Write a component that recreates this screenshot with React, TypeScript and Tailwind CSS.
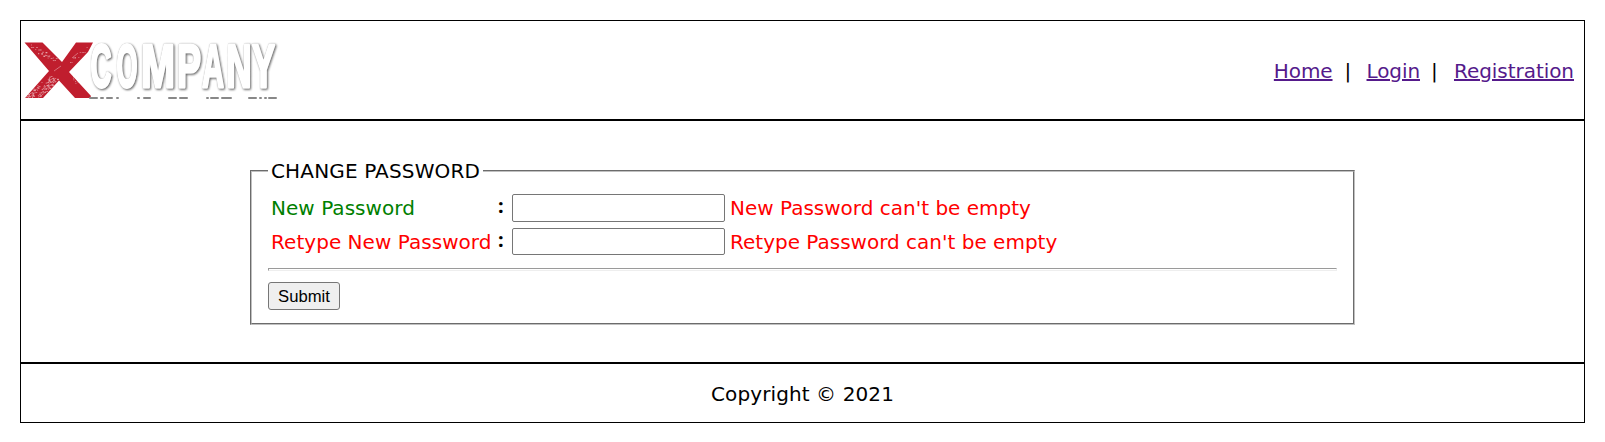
import React from "react";

const letters = [
  { ch: "C", x: 90.5, w: 21 },
  { ch: "O", x: 116.5, w: 21 },
  { ch: "M", x: 141, w: 34 },
  { ch: "P", x: 177, w: 24 },
  { ch: "A", x: 202, w: 22 },
  { ch: "N", x: 226.5, w: 25 },
  { ch: "Y", x: 252, w: 23 },
];

const dashes = [
  [89, 9], [100, 4], [106, 7], [116, 3], [137, 3], [143, 8], [168, 9], [179, 9],
  [206, 3], [210, 9], [221, 11], [248, 9], [259, 3], [264, 3], [268, 9],
];

const specks = Array.from({ length: 150 }, (_, i) => {
  const t = (i * 0.618) % 1;
  const s = (i * 0.387) % 1;
  if (i % 15 < 10) return { x: 28 + t * 26 + s * 10 - 4, y: 96 - t * 21 + s * 5 };
  if (i % 15 < 12) return { x: 72 + s * 12, y: 74 + t * 9 };
  if (i % 15 < 14) return { x: 30 + t * 27, y: 44 + t * 13 + s * 6 };
  return { x: 70 + t * 18, y: 60 - t * 15 + s * 5 };
});

function Logo() {
  return (
    <svg className="block h-[70px] w-[260px]" viewBox="21 36 260 70" role="img" aria-label="X Company">
      <path fill="#c01e2e" d="M24.500 42.500H42.500L62 62L76 42.500H93L88 52L69 72L91 96L90 98H75L59 80.500L43 98H25L49 71Z" />
      <g fill="#fff" opacity="0.6">
        {specks.map((p, i) => (
          <rect key={i} x={p.x} y={p.y} width={i % 3 ? 1 : 1.8} height={i % 4 ? 0.7 : 1.3} />
        ))}
      </g>
      <path d="M54 71l7-5M72 58l6-5M45 55l5 2" stroke="#e8a5ab" strokeWidth="0.6" />
      <g
        fill="#fff"
        stroke="#fff"
        strokeWidth="3"
        strokeLinejoin="round"
        fontFamily="Liberation Sans Narrow, Liberation Sans"
        fontWeight="700"
        fontSize="62"
        className="[filter:drop-shadow(0_0_0.4px_#bbb)_drop-shadow(1px_1px_0.8px_#666)]"
      >
        {letters.map((l) => (
          <text key={l.ch} x={l.x} y="87" textLength={l.w} lengthAdjust="spacingAndGlyphs">
            {l.ch}
          </text>
        ))}
      </g>
      <g fill="#888" className="[filter:blur(0.4px)]">
        {dashes.map(([x, w]) => (
          <rect key={x} x={x} y="97" width={w} height="2" rx="1" />
        ))}
      </g>
    </svg>
  );
}

function Field({ label, error, color, height }: { label: string; error: string; color: string; height: string }) {
  return (
    <div className="flex items-start">
      <label className={`w-[230px] pl-[3px] leading-[29px] tracking-[0.04px] ${color}`}>{label}</label>
      <b className="w-[14px] font-['Noto_Sans','DejaVu_Sans',sans-serif] leading-[24px]">:</b>
      <input type="password" className={`w-[213px] rounded-[2px] border border-[#767676] bg-white ${height}`} />
      <span className="pl-[5px] leading-[29px] text-[#ff0000]">{error}</span>
    </div>
  );
}

export default function App() {
  return (
    <div className="h-[442px] bg-white p-5 pb-[19px] font-['Verdana','DejaVu_Sans',sans-serif] text-[20px] whitespace-nowrap text-black">
      <div className="flex h-[403px] flex-col border border-black">
        <header className="flex h-[100px] items-start justify-between border-b-2 border-black pt-[15px] pr-[10px]">
          <Logo />
          <nav className="flex pt-[20px] leading-[30px] tracking-[-0.1px] text-[#551a8b]">
            <a className="underline" href="#home">Home</a>
            <span className="w-[34px] pl-[12px] text-black">|</span>
            <a className="underline" href="#login">Login</a>
            <span className="w-[34px] pl-[11px] text-black">|</span>
            <a className="tracking-[-0.05px] underline" href="#registration">Registration</a>
          </nav>
        </header>
        <main className="h-[243px] border-b-2 border-black pt-[37px] pl-[229px]">
          <fieldset className="h-[167px] w-[1105px] border-2 border-[#c0c0c0] [border-style:groove] px-[16px]">
            <legend className="h-[26px] pr-[3px] pl-[3px] leading-[26px] tracking-[0.15px]">CHANGE PASSWORD</legend>
            <div className="mt-[10px] flex h-[61px] flex-col gap-[6px]">
              <div className="h-[28px]">
                <Field label="New Password" error="New Password can't be empty" color="text-[#008000]" height="h-[28px]" />
              </div>
              <div className="h-[27px]">
                <Field label="Retype New Password" error="Retype Password can't be empty" color="text-[#ff0000]" height="h-[27px]" />
              </div>
            </div>
            <div className="mt-[13px] h-[3px] border border-[#eee] border-t-[#9a9a9a] border-l-[#9a9a9a]" />
            <button className="mt-[11px] block h-[28px] w-[72px] rounded-[3px] border border-[#767676] bg-[#efefef] font-['Liberation_Sans',sans-serif] text-[16.667px] leading-[25px]">
              Submit
            </button>
          </fieldset>
        </main>
        <footer className="flex flex-1 items-center justify-center pt-px tracking-[0.1px]">Copyright © 2021</footer>
      </div>
    </div>
  );
}
